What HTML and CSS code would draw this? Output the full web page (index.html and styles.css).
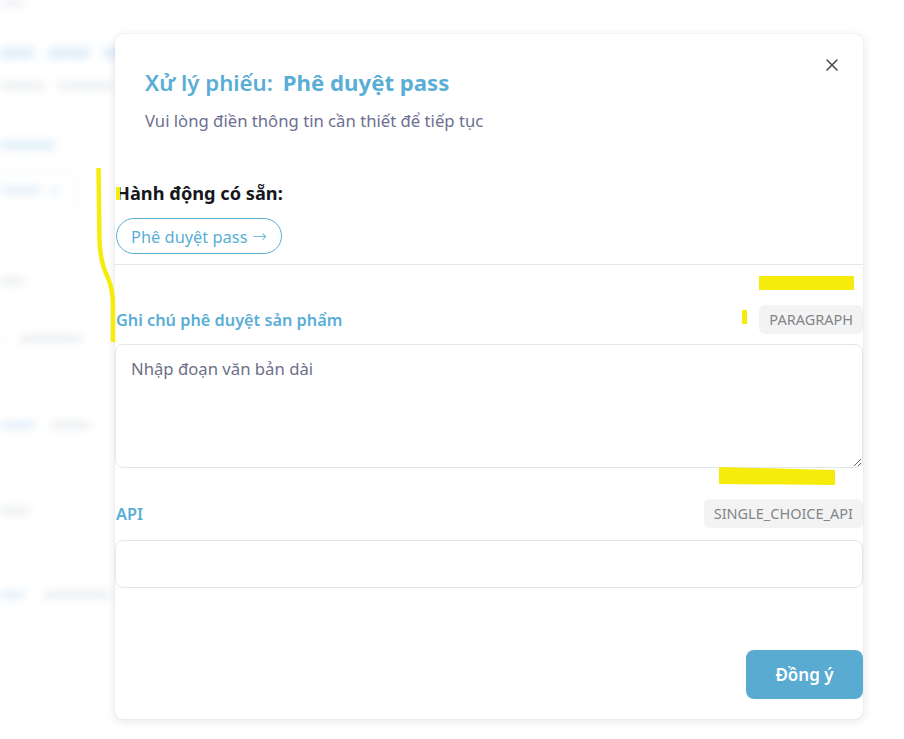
FILE: index.html
```html
<!DOCTYPE html>
<html lang="vi">
<head>
<meta charset="utf-8">
<title>Xử lý phiếu</title>
<link rel="stylesheet" href="styles.css">
</head>
<body>
<div class="page" aria-hidden="true">
  <div class="bg-line bg-top"><i class="g w25"></i></div>
  <div class="bg-line bg-title"><i class="b w35"></i><i class="b w42"></i><i class="b w20"></i></div>
  <div class="bg-line bg-sub"><i class="g w45"></i><i class="g w55"></i></div>
  <div class="bg-line bg-link"><i class="b w55"></i></div>
  <div class="bg-select"><i class="b w40"></i><i class="b w8"></i></div>
  <div class="bg-line bg-r1"><i class="g w25"></i></div>
  <div class="bg-line bg-r2"><i class="b w3"></i><i class="g w62"></i></div>
  <div class="bg-line bg-r3"><i class="b w35"></i><i class="g w40"></i></div>
  <div class="bg-line bg-r4"><i class="g w30"></i></div>
  <div class="bg-line bg-r5"><i class="b w25"></i><i class="g w67"></i></div>
</div>

<div class="modal" role="dialog">
  <div class="modal-head">
    <h1 class="modal-title"><span class="t-pre">Xử lý phiếu:</span><span class="t-main">Phê duyệt pass</span></h1>
    <p class="modal-sub">Vui lòng điền thông tin cần thiết để tiếp tục</p>
    <button class="close" aria-label="Đóng">
      <svg width="14" height="14" viewBox="0 0 14 14"><path d="M2 2 L12 12 M12 2 L2 12" stroke="#4a4d5a" stroke-width="1.6" stroke-linecap="round"/></svg>
    </button>
  </div>
  <div class="modal-body">
    <div class="actions">
      <div class="actions-title">Hành động có sẵn:</div>
      <button class="pill">Phê duyệt pass <span class="arrow">→</span></button>
    </div>
    <div class="field field-1">
      <div class="field-head">
        <label class="field-label">Ghi chú phê duyệt sản phẩm</label>
        <span class="badge">PARAGRAPH</span>
      </div>
      <textarea class="textarea" placeholder="Nhập đoạn văn bản dài"></textarea>
    </div>
    <div class="field field-2">
      <div class="field-head">
        <label class="field-label">API</label>
        <span class="badge">SINGLE_CHOICE_API</span>
      </div>
      <input class="input" type="text">
    </div>
    <div class="footer">
      <button class="submit">Đồng ý</button>
    </div>
  </div>
</div>

<svg class="marks" width="904" height="739" viewBox="0 0 904 739">
  <path d="M98.5 168 L99.5 240 Q100 262 108 278 Q113 290 113 305 L113 342" fill="none" stroke="#f6ec0c" stroke-width="4.5"/>
  <rect x="116" y="187" width="4" height="13" fill="#f6ec0c"/>
  <rect x="759" y="276" width="95" height="14" fill="#f6ec0c"/>
  <rect x="742" y="310" width="5" height="14" fill="#f6ec0c"/>
  <path d="M719 467 L835 470 L835 485 L719 484 Z" fill="#f6ec0c"/>
</svg>
</body>
</html>
```

FILE: styles.css
```css
* { box-sizing: border-box; }
html, body { margin: 0; padding: 0; }
body {
  width: 904px;
  height: 739px;
  overflow: hidden;
  background: #ffffff;
  font-family: "Noto Sans", "Open Sans", sans-serif;
  position: relative;
}

/* blurred page behind the modal */
.page {
  filter: blur(4px);
  display: flex;
  flex-direction: column;
  align-items: flex-start;
}
.bg-line { display: flex; gap: 13px; height: 8px; }
.bg-line i, .bg-select i { display: block; height: 100%; border-radius: 3px; }
.bg-line .g, .bg-select .g { background: #eceef1; }
.bg-line .b, .bg-select .b { background: #e2eff9; }
.w3 { width: 3px; } .w8 { width: 8px; } .w20 { width: 20px; } .w25 { width: 25px; }
.w30 { width: 30px; } .w35 { width: 35px; } .w40 { width: 40px; } .w42 { width: 42px; }
.w45 { width: 45px; } .w55 { width: 55px; } .w62 { width: 62px; } .w67 { width: 67px; }
.bg-top { height: 6px; }
.bg-title { margin-top: 41px; height: 12px; }
.bg-sub { margin-top: 23px; }
.bg-link { margin-top: 50px; height: 10px; }
.bg-select {
  margin-top: 20px; margin-left: -20px; width: 95px; height: 40px;
  border: 1px solid #e8f1f8; border-radius: 8px;
  display: flex; align-items: center; gap: 10px; padding-left: 20px;
}
.bg-select i { height: 8px; }
.bg-r1 { margin-top: 67px; }
.bg-r2 { margin-top: 50px; gap: 17px; }
.bg-r3 { margin-top: 78px; gap: 15px; }
.bg-r4 { margin-top: 78px; }
.bg-r5 { margin-top: 76px; gap: 18px; }

/* modal */
.modal {
  position: absolute;
  left: 115px;
  top: 34px;
  width: 748px;
  height: 685px;
  background: #fff;
  border-radius: 8px;
  box-shadow: 0 2px 10px rgba(30, 40, 60, 0.12), 0 0 1px rgba(30,40,60,0.18);
  display: flex;
  flex-direction: column;
}
.modal-head {
  position: relative;
  padding: 33px 30px 0 30px;
}
.modal-title {
  margin: 0;
  font-size: 22.2px;
  line-height: 32px;
  font-weight: 600;
  color: #5aaed6;
  display: flex;
  gap: 10px;
}
.t-main { font-weight: 700; }
.modal-sub {
  margin: 10px 0 0;
  font-size: 16.7px;
  line-height: 24px;
  color: #6d7090;
}
.close {
  position: absolute;
  right: 22px;
  top: 22px;
  width: 18px; height: 18px;
  padding: 0; border: 0; background: transparent;
  display: flex; align-items: center; justify-content: center;
}

.modal-body {
  flex: 1;
  display: flex;
  flex-direction: column;
}
.actions {
  margin-top: 48px;
  padding: 0 0 10px 1px;
  border-bottom: 1px solid #e5e7ed;
}
.actions-title {
  font-size: 18.2px;
  line-height: 24px;
  font-weight: 700;
  color: #16171d;
}
.pill {
  margin-top: 13px;
  height: 36px;
  padding: 0 14px 0 14px;
  border: 1px solid #5aaed6;
  border-radius: 18px;
  background: #fff;
  color: #5aaed6;
  font-family: inherit;
  font-size: 16.4px;
  display: flex;
  align-items: center;
  gap: 5px;
}
.arrow { font-family: "DejaVu Sans", sans-serif; font-size: 17px; line-height: 1; font-weight: 300; }

.field-head {
  display: flex;
  justify-content: space-between;
  align-items: center;
  padding-left: 1px;
}
.field-label {
  font-size: 16.3px;
  font-weight: 600;
  color: #5aaed6;
}
.badge {
  height: 29px;
  padding: 0 10px;
  border-radius: 6px;
  background: #f3f3f4;
  color: #838589;
  font-size: 14.5px;
  line-height: 29px;
}
.field-1 { margin-top: 40px; }
.field-2 { margin-top: 31px; }
.textarea {
  display: block;
  margin-top: 10px;
  width: 100%;
  height: 124px;
  border: 1px solid #e3e5ef;
  border-radius: 8px;
  padding: 12px 15px;
  font-family: inherit;
  font-size: 16.7px;
  line-height: 24px;
  color: #333;
  resize: vertical;
  outline: none;
}
.textarea::placeholder { color: #6d7085; }
.input {
  display: block;
  margin-top: 12px;
  width: 100%;
  height: 48px;
  border: 1px solid #e3e5ef;
  border-radius: 8px;
  outline: none;
}

.footer {
  margin-top: auto;
  padding-bottom: 20px;
  display: flex;
  justify-content: flex-end;
}
.submit {
  width: 117px;
  height: 49px;
  border: 0;
  border-radius: 8px;
  background: #5aabd2;
  color: #fff;
  font-family: inherit;
  font-size: 17px;
  font-weight: 600;
}

.marks { position: absolute; left: 0; top: 0; pointer-events: none; }
```
